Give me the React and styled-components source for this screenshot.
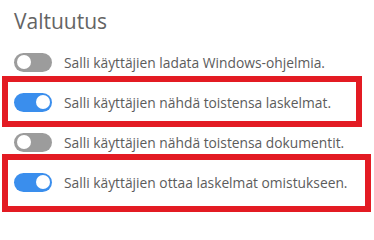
import styled, { createGlobalStyle } from 'styled-components';

const GlobalStyle = createGlobalStyle`
  html, body {
    margin: 0;
    padding: 0;
    background: #fff;
  }
  body {
    font-family: "Open Sans", "Liberation Sans", sans-serif;
  }
`;

const Panel = styled.div`
  width: 374px;
  height: 214px;
  overflow: hidden;
  background: #fff;
`;

const Title = styled.h2`
  margin: 7px 0 7px 14px;
  font-size: 21px;
  font-weight: 400;
  line-height: 28px;
  color: #646464;
`;

const List = styled.div`
  display: flex;
  flex-direction: column;
`;

// red annotation frame drawn around some rows
const Row = styled.label`
  position: relative;
  display: flex;
  align-items: center;
  gap: 12px;
  height: 40px;
  padding-left: 14px;

  &::after {
    content: '';
    display: ${(p) => (p.$mark ? 'block' : 'none')};
    position: absolute;
    left: 2px;
    right: ${(p) => p.$markRight ?? 12}px;
    top: ${(p) => p.$markTop ?? -6}px;
    bottom: ${(p) => p.$markBottom ?? -5}px;
    border: 6px solid #e31b23;
    pointer-events: none;
  }
`;

const Track = styled.span`
  position: relative;
  flex: none;
  width: 38px;
  height: 19px;
  border-radius: 10px;
  background: ${(p) => (p.$on ? '#3a8eed' : '#9c9c9c')};
`;

const Knob = styled.span`
  position: absolute;
  top: 2.5px;
  left: ${(p) => (p.$on ? '21.5px' : '2.5px')};
  width: 14px;
  height: 14px;
  border-radius: 50%;
  background: #fff;
`;

const Text = styled.span`
  font-size: 13.8px;
  color: #5c5c5c;
  white-space: nowrap;
`;

const Toggle = ({ on }) => (
  <Track $on={on}>
    <Knob $on={on} />
  </Track>
);

const options = [
  { text: 'Salli käyttäjien ladata Windows-ohjelmia.', on: false },
  { text: 'Salli käyttäjien nähdä toistensa laskelmat.', on: true, mark: { right: 12, top: -6, bottom: -5 } },
  { text: 'Salli käyttäjien nähdä toistensa dokumentit.', on: false },
  { text: 'Salli käyttäjien ottaa laskelmat omistukseen.', on: true, mark: { right: 3, top: -8, bottom: -10 } },
];

export default function App() {
  return (
    <>
      <GlobalStyle />
      <Panel>
        <Title>Valtuutus</Title>
        <List>
          {options.map((o) => (
            <Row
              key={o.text}
              $mark={!!o.mark}
              $markRight={o.mark?.right}
              $markTop={o.mark?.top}
              $markBottom={o.mark?.bottom}
            >
              <Toggle on={o.on} />
              <Text>{o.text}</Text>
            </Row>
          ))}
        </List>
      </Panel>
    </>
  );
}
